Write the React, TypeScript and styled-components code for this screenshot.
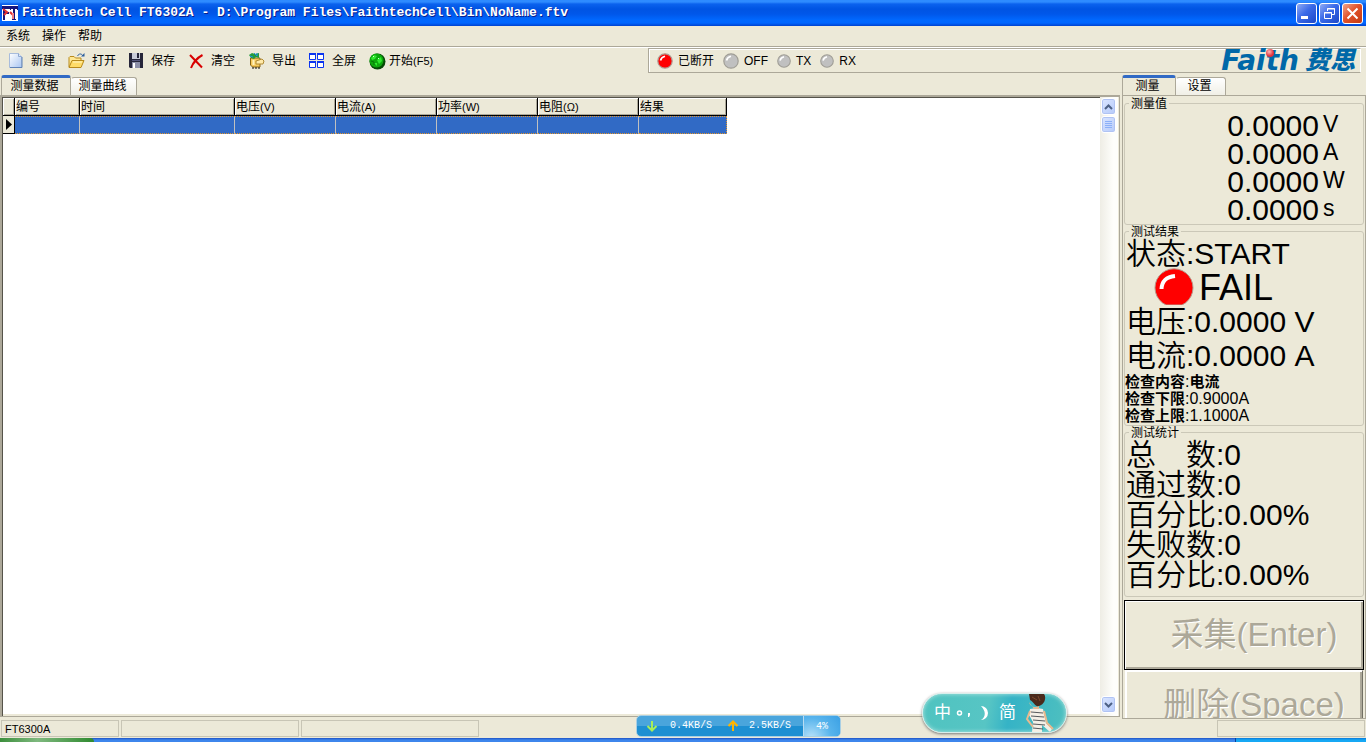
import React from "react";
import styled, { createGlobalStyle } from "styled-components";

const ui = `"Liberation Sans", "Noto Sans CJK SC", sans-serif`;
const face = "#ece9d8";
const shade = "#aca899";

const Global = createGlobalStyle`
  * { box-sizing: border-box; }
  body { margin: 0; background: ${face}; color: #000; font: 12px/16px ${ui}; }
  button { font: inherit; color: inherit; border: 0; padding: 0; margin: 0; background: none; }
`;

const Window = styled.div`
  position: relative;
  display: flex;
  flex-direction: column;
  height: 100vh;
  overflow: hidden;
  background: ${face};
`;

const TitleBar = styled.header`
  display: flex;
  align-items: center;
  flex: none;
  height: 26px;
  padding: 0 3px 0 2px;
  gap: 4px;
  background: linear-gradient(#2e8bff 0, #2e8bff 2px, #0b62ee 4px, #0054e3 9px, #0057ea 14px, #0068ff 20px, #0066ff 23px, #0042cf 26px);
`;

const Title = styled.h1`
  flex: 1;
  margin: 0;
  overflow: hidden;
  white-space: pre;
  color: #fff;
  font: bold 13px/24px "Liberation Mono", monospace;
  text-shadow: 1px 1px 0 #0a1e8c;
`;

const Controls = styled.div`
  display: flex;
  gap: 2px;
`;

const ControlButton = styled.button<{ $danger?: boolean }>`
  display: flex;
  width: 21px;
  height: 21px;
  border: 1px solid #fff;
  border-radius: 3px;
  background: ${(p) =>
    p.$danger
      ? "linear-gradient(135deg, #f0a58c, #e2532b 45%, #c33a12)"
      : "linear-gradient(135deg, #8fabf5, #3a6ae8 45%, #1c48c8)"};
`;

const MenuBar = styled.nav`
  display: flex;
  flex: none;
  height: 22px;
  padding: 0 6px;
  gap: 12px;
  border-bottom: 1px solid #fff;
  box-shadow: inset 0 -1px 0 ${shade};
`;

const MenuItem = styled.button`
  height: 20px;
  line-height: 20px;
`;

const ToolBar = styled.div`
  display: flex;
  align-items: center;
  flex: none;
  height: 27px;
  padding: 0 5px 2px 8px;
`;

const Tools = styled.div`
  display: flex;
  flex: 0 0 640px;
`;

const Tool = styled.button<{ $tight?: boolean }>`
  display: flex;
  align-items: center;
  gap: ${(p) => (p.$tight ? 3 : 7)}px;
  min-width: 60px;
  height: 24px;
  white-space: nowrap;
  svg { flex: none; }
`;

const Latin = styled.span`
  font-size: 11px;
`;

const LinkPanel = styled.div`
  display: flex;
  align-items: center;
  flex: 1;
  height: 25px;
  padding: 0 5px 0 8px;
  gap: 9px;
  border: 1px solid ${shade};
  border-right-color: #fff;
  box-shadow: inset 1px 1px 0 #fff;
`;

const Lamp = styled.span`
  display: flex;
  align-items: center;
  gap: 5px;
  line-height: 18px;
  padding-top: 1px;
`;

const Logo = styled.div`
  display: flex;
  align-items: center;
  gap: 6px;
  height: 23px;
  margin-left: auto;
  color: #0068a8;
  font: italic bold 28px/23px "DejaVu Sans", "Noto Sans CJK SC", sans-serif;
`;

const LogoMark = styled.span`
  position: relative;
`;

const LogoDot = styled.i`
  position: absolute;
  top: 0;
  left: 45px;
  width: 8px;
  height: 8px;
  border-radius: 50%;
  background: radial-gradient(circle at 40% 35%, #fbb, #e0323c 60%);
`;

const LogoCn = styled.span`
  font-size: 25px;
  font-weight: 900;
`;

const Body = styled.div`
  display: flex;
  flex: 1;
  min-height: 0;
`;

const Left = styled.main`
  display: flex;
  flex-direction: column;
  flex: 1;
  min-width: 0;
  padding-bottom: 2px;
`;

const Tabs = styled.div<{ $inset?: boolean }>`
  display: flex;
  align-items: flex-end;
  flex: none;
  height: 20px;
  padding-left: ${(p) => (p.$inset ? 0 : 1)}px;
`;

const Tab = styled.button<{ $active?: boolean; $w: number }>`
  width: ${(p) => p.$w}px;
  height: ${(p) => (p.$active ? 20 : 18)}px;
  padding: 0 3px 1px 0;
  border: 1px solid #aca899;
  border-top: ${(p) => (p.$active ? "3px solid #316ac5" : "1px solid #aca899")};
  border-bottom: 0;
  border-left-color: ${(p) => (p.$active ? "#aca899" : "transparent")};
  border-radius: 3px 3px 0 0;
  background: ${(p) => (p.$active ? face : "linear-gradient(#fff, #f0efe6)")};
  line-height: 15px;
  white-space: nowrap;
`;

const GridFrame = styled.section`
  display: flex;
  flex: 1;
  min-height: 0;
  margin-right: 2px;
  border: 2px solid ${shade};
  border-right: 1px solid ${shade};
  border-bottom: 1px solid ${shade};
  background: #fff;
  box-shadow: inset 1px 1px 0 #55534a, inset -2px -2px 0 #ece9d8;
`;

const GridArea = styled.div`
  flex: 1;
  min-width: 0;
  padding: 1px 0 0 1px;
`;

const Grid = styled.table`
  width: 724px;
  table-layout: fixed;
  border-collapse: separate;
  border-spacing: 0;
`;

const HeadCell = styled.th`
  height: 18px;
  padding: 0 1px;
  overflow: hidden;
  border-right: 1px solid #000;
  border-bottom: 1px solid #000;
  background: ${face};
  box-shadow: inset 1px 1px 0 #fff, inset -1px -1px 0 ${shade};
  font-weight: normal;
  line-height: 16px;
  text-align: left;
  white-space: nowrap;
`;

const Marker = styled.th`
  height: 18px;
  padding: 0 0 0 2px;
  border-right: 1px solid #000;
  border-bottom: 1px solid #000;
  background: ${face};
  svg { display: block; }
`;

const Cell = styled.td`
  height: 18px;
  padding: 0;
  border-top: 1px dotted #e0952e;
  border-bottom: 1px dotted #e0952e;
  border-right: 1px solid #c0c0c0;
  background: #316ac5;
  &:last-child { border-right: 1px dotted #e0952e; }
`;

const ScrollBar = styled.div`
  display: flex;
  flex-direction: column;
  flex: none;
  width: 19px;
  padding: 1px 3px 3px 1px;
  gap: 1px;
  background: linear-gradient(90deg, #eeede5, #fefefb 70%);
  box-shadow: inset -1px 0 0 #ece9d8;
`;

const ScrollButton = styled.button<{ $last?: boolean }>`
  display: flex;
  align-items: center;
  justify-content: center;
  flex: none;
  height: 17px;
  margin-top: ${(p) => (p.$last ? "auto" : 0)};
  border: 1px solid #fff;
  border-radius: 3px;
  background: linear-gradient(135deg, #dbe6ff, #b5cafa);
  box-shadow: inset 0 0 0 1px #b0c3f3;
`;

const Side = styled.aside`
  display: flex;
  flex-direction: column;
  flex: none;
  width: 244px;
  min-height: 0;
`;

const SidePage = styled.div`
  display: flex;
  flex-direction: column;
  flex: 1;
  min-height: 0;
  overflow: hidden;
  padding: 2px 1px 0;
  border: 1px solid ${shade};
`;

const Group = styled.fieldset<{ $pad: string }>`
  flex: none;
  min-width: 0;
  margin: 0 0 1px;
  padding: ${(p) => p.$pad};
  border: 1px solid #cbc8b8;
  border-radius: 3px;
`;

const Legend = styled.legend`
  height: 11px;
  margin-left: 4px;
  padding: 0 2px;
  font: 12px/12px ${ui};
`;

const Reading = styled.div`
  display: grid;
  grid-template-columns: 1fr 40px;
  column-gap: 4px;
  height: 28px;
  font: 30px/28px ${ui};
  text-align: right;
`;

const Unit = styled.span`
  font-size: 23px;
  line-height: 24px;
  text-align: left;
`;

const Line = styled.div<{ $h: number }>`
  height: ${(p) => p.$h}px;
  padding-left: 1px;
  font: 350 30px/${(p) => p.$h}px ${ui};
  white-space: pre;
`;

const FailLine = styled.div`
  display: flex;
  align-items: flex-end;
  gap: 5px;
  height: 34px;
  padding-left: 29px;
  font: 36px/34px ${ui};
  svg { flex: none; }
`;

const Check = styled.div`
  height: 17px;
  font: 16px/17px ${ui};
  b { font-size: 15px; font-weight: 600; }
`;

const BigButton = styled.button<{ $focus?: boolean }>`
  flex: none;
  height: 70px;
  margin: ${(p) => (p.$focus ? "2px 0 0" : "0 1px")};
  padding-left: 20px;
  border: 1px solid ${(p) => (p.$focus ? "#000" : "#fff")};
  border-right-color: ${(p) => (p.$focus ? "#000" : "#716f64")};
  background: ${face};
  box-shadow: inset 1px 1px 0 #fff, inset -2px -2px 0 ${shade};
  font: 33px/66px ${ui};
  white-space: nowrap;
  &:disabled { color: ${shade}; text-shadow: 1px 1px 0 #fff; }
`;

const StatusBar = styled.footer`
  display: flex;
  flex: none;
  height: 19px;
  padding: 1px 1px 0;
  gap: 2px;
`;

const StatusCell = styled.div<{ $w: number; $end?: boolean }>`
  width: ${(p) => p.$w}px;
  height: 17px;
  margin-left: ${(p) => (p.$end ? "auto" : 0)};
  padding-left: 3px;
  border: 1px solid #c8c5b5;
  font-size: 11px;
  line-height: 16px;
`;

const TaskBar = styled.div`
  display: flex;
  flex: none;
  height: 4px;
  background: linear-gradient(#1f52c4, #3d86ec 2px);
`;

const StartEdge = styled.div`
  width: 94px;
  border-radius: 0 4px 0 0;
  background: linear-gradient(90deg, #3c8f3c, #7fb97f 40%, #2f8a2f);
`;

const TrayEdge = styled.div`
  width: 131px;
  margin-left: auto;
  border-left: 1px solid #0a3e9c;
  background: linear-gradient(#0b78d8, #16a8f4 2px);
`;

const SpeedWidget = styled.div`
  position: absolute;
  left: calc(50% - 47px);
  bottom: 5px;
  display: flex;
  width: 205px;
  height: 22px;
  overflow: hidden;
  border: 1px solid #a9cfe4;
  border-radius: 5px;
  background: linear-gradient(#4aa5dc 0, #4aa5dc 50%, #1e8fd2 50%);
  color: #fff;
  font: 10px/22px "Liberation Mono", monospace;
`;

const Rate = styled.span<{ $w: number }>`
  display: flex;
  align-items: center;
  width: ${(p) => p.$w}px;
  padding-left: 8px;
  gap: 11px;
`;

const Load = styled.span`
  flex: 1;
  border-left: 1px solid #b9dcf2;
  background: radial-gradient(circle at 20% 110%, #b8e2fa, #58b4ec 55%, #3aa0e4);
  text-align: center;
`;

const ImeBar = styled.div`
  position: absolute;
  right: 299px;
  bottom: 9px;
  display: flex;
  align-items: center;
  width: 145px;
  height: 40px;
  padding-left: 11px;
  gap: 4px;
  overflow: hidden;
  border: 1px solid #d8efec;
  border-radius: 20px;
  background: linear-gradient(100deg, #4fc3c0, #57c5c4 45%, #35b3c6 60%, #4fc0bf);
  box-shadow: 0 1px 3px #777, inset 0 0 4px #b5e6e2;
  color: #fff;
  font: 17px/38px ${ui};
`;

const ImePicture = styled.svg`
  position: absolute;
  top: 0;
  right: 0;
`;

const AppIcon = () => (
  <svg width="16" height="16" viewBox="0 0 16 16">
    <path d="M0 0h16v16H0z" fill="#fff" />
    <path d="M0 1h8v3H3v3h4v2H3v6H1V4H0zM8 1h8v4h-1V4h-2v10h1v1h-4v-1h1V4H9v1H8z" fill="#15157c" />
    <path d="M1 4l4 3-3 3M8 7l3 3" stroke="#e23030" strokeWidth="2" fill="none" />
    <path d="M10 8h2v6h-2z" fill="#f08080" />
  </svg>
);

const NewIcon = () => (
  <svg width="16" height="16" viewBox="0 0 16 16">
    <defs>
      <linearGradient id="page" x1="0" y1="0" x2="1" y2="1">
        <stop offset="0" stopColor="#fff" />
        <stop offset="1" stopColor="#a9c6f2" />
      </linearGradient>
    </defs>
    <path d="M1.500 .5h9l3 3v11h-12z" fill="url(#page)" stroke="#a8bcdc" />
    <path d="M2 14.500h12V4" fill="none" stroke="#5f83b8" />
    <path d="M10.500 .5v3h3" fill="#dce8fb" stroke="#8fa8d0" />
  </svg>
);

const OpenIcon = () => (
  <svg width="17" height="16" viewBox="0 0 17 16">
    <path d="M1 14V4.500l1-1h4l1.500 1.500H13V8" fill="#ffe894" stroke="#b88a1c" />
    <path d="M1 14.500 4 7.500h12l-3 7z" fill="#ffdc68" stroke="#b88a1c" />
    <path d="M5 9h9" stroke="#fff6c8" />
    <path d="M9.500 3C11 .3 13.500 .3 15 3" fill="none" stroke="#2b5f9e" />
    <path d="M13 3.500h3.500V0z" fill="#2b5f9e" />
  </svg>
);

const SaveIcon = () => (
  <svg width="16" height="16" viewBox="0 0 16 16">
    <path d="M1 0h14v15H2l-1-1z" fill="#26263a" />
    <path d="M4 0h8v6H4z" fill="#c9ccd8" />
    <path d="M9 0h2v5H9z" fill="#26263a" />
    <path d="M4 7h8v1H4z" fill="#55577c" />
    <path d="M4 9h8v6H4z" fill="#8d90a8" />
    <path d="M5 10h2v5H5z" fill="#fff" />
  </svg>
);

const ClearIcon = () => (
  <svg width="16" height="16" viewBox="0 0 16 16">
    <path d="M2 2 14 14.500M14.500 2C9 5 5 10 3 15" fill="none" stroke="#d80000" strokeWidth="2" />
  </svg>
);

const ExportIcon = () => (
  <svg width="17" height="17" viewBox="0 0 17 17">
    <path d="M2.500 6h9.500v9H4.500l-2-2z" fill="#f6c95c" stroke="#8a6414" />
    <path d="M8 9l6-2 2 2-1 3H8z" fill="#ffe9a8" stroke="#b08a34" />
    <path d="M5.500 8v5" stroke="#fff0bd" strokeWidth="2" />
    <path d="M4 16h8" stroke="#111" strokeDasharray="2 1" />
    <path d="M1 3l3-2 3 1 4-1v5L8 5 6 7 3 6z" fill="#259a3c" />
    <path d="M2 4l3 1M6 1l3 3M9 1v3" stroke="#1c8ee8" strokeWidth="1" />
  </svg>
);

const FullIcon = () => (
  <svg width="17" height="16" viewBox="0 0 17 16">
    <path d="M1.500 1.500h6v5h-6zM9.500 1.500h6v5h-6zM1.500 9.500h6v5h-6zM9.500 9.500h6v5h-6z" fill="#fff" stroke="#0a34f0" />
    <path d="M1 1h7M9 1h7M1 9h7M9 9h7" stroke="#0a34f0" strokeWidth="2" />
  </svg>
);

const StartIcon = () => (
  <svg width="18" height="18" viewBox="0 0 18 18">
    <circle cx="9.500" cy="9.500" r="8" fill="#064a06" />
    <circle cx="8.500" cy="8.500" r="7" fill="#0da80d" />
    <path d="M3 6l3-3 3 1-2 3-3 1zM9 8l4-3 1 4-3 3zM6 11l3 0 0 3z" fill="#2fea2f" />
    <path d="M3 9l3 1 0 3" stroke="#067806" fill="none" />
    <path d="M5 5l1-1M10 7l1-1" stroke="#d6ffd6" />
  </svg>
);

const LampIcon = ({ size, color, rim }: { size: number; color: string; rim: string }) => (
  <svg width={size} height={size} viewBox="0 0 16 16">
    <circle cx="8" cy="8" r="7.200" fill={color} stroke={rim} strokeWidth="1.200" />
    <path d="M3.500 7.500C4 5 5 4 8 3.200" fill="none" stroke="#fff" strokeWidth="1.700" />
  </svg>
);

const FailLamp = () => (
  <svg width="40" height="37" viewBox="0 0 40 37">
    <path d="M12 37A19 19 0 1 1 28 37z" fill="#f00" stroke="#b89a8c" />
    <path d="M7.500 21C8 13 12 9 21 8" fill="none" stroke="#fff" strokeWidth="4" />
  </svg>
);

const tools = [
  { label: "新建", icon: <NewIcon /> },
  { label: "打开", icon: <OpenIcon /> },
  { label: "保存", icon: <SaveIcon /> },
  { label: "清空", icon: <ClearIcon /> },
  { label: "导出", icon: <ExportIcon /> },
  { label: "全屏", icon: <FullIcon /> },
];

const columns = [
  { label: "编号", unit: "", width: 65 },
  { label: "时间", unit: "", width: 155 },
  { label: "电压", unit: "(V)", width: 101 },
  { label: "电流", unit: "(A)", width: 101 },
  { label: "功率", unit: "(W)", width: 101 },
  { label: "电阻", unit: "(Ω)", width: 101 },
  { label: "结果", unit: "", width: 88 },
];

const readings = ["V", "A", "W", "s"];
const stats = ["总\u3000数:0", "通过数:0", "百分比:0.00%", "失败数:0", "百分比:0.00%"];

export default function App() {
  return (
    <Window>
      <Global />
      <TitleBar>
        <AppIcon />
        <Title>{"Faithtech Cell FT6302A - D:\\Program Files\\FaithtechCell\\Bin\\NoName.ftv"}</Title>
        <Controls>
          <ControlButton aria-label="最小化">
            <svg width="19" height="19"><path d="M4 12h7v3H4z" fill="#fff" /></svg>
          </ControlButton>
          <ControlButton aria-label="还原">
            <svg width="19" height="19" fill="none" stroke="#fff">
              <path d="M7.500 7V4.500h7v6H12M7 5h8M4.500 8.500h7v6h-7zM4 9h8" />
            </svg>
          </ControlButton>
          <ControlButton $danger aria-label="关闭">
            <svg width="19" height="19"><path d="M4.500 4.500l10 10M14.500 4.500l-10 10" stroke="#fff" strokeWidth="2" /></svg>
          </ControlButton>
        </Controls>
      </TitleBar>

      <MenuBar>
        {["系统", "操作", "帮助"].map((m) => <MenuItem key={m}>{m}</MenuItem>)}
      </MenuBar>

      <ToolBar>
        <Tools>
          {tools.map((t) => <Tool key={t.label}>{t.icon}{t.label}</Tool>)}
          <Tool $tight><StartIcon /><span>开始<Latin>(F5)</Latin></span></Tool>
        </Tools>
        <LinkPanel>
          <Lamp><LampIcon size={16} color="#f00" rim="#b09a90" />已断开</Lamp>
          <Lamp><LampIcon size={16} color="#c0c0c0" rim="#a09e96" />OFF</Lamp>
          <Lamp><LampIcon size={14} color="#c0c0c0" rim="#a09e96" />TX</Lamp>
          <Lamp><LampIcon size={14} color="#c0c0c0" rim="#a09e96" />RX</Lamp>
          <Logo>
            <LogoMark>Faith<LogoDot /></LogoMark>
            <LogoCn>费思</LogoCn>
          </Logo>
        </LinkPanel>
      </ToolBar>

      <Body>
        <Left>
          <Tabs>
            <Tab $active $w={70}>测量数据</Tab>
            <Tab $w={66}>测量曲线</Tab>
          </Tabs>
          <GridFrame>
            <GridArea>
              <Grid>
                <colgroup>
                  <col width={12} />
                  {columns.map((c) => <col key={c.label} width={c.width} />)}
                </colgroup>
                <thead>
                  <tr>
                    <HeadCell aria-label="当前行" />
                    {columns.map((c) => (
                      <HeadCell key={c.label}>{c.label}{c.unit && <Latin>{c.unit}</Latin>}</HeadCell>
                    ))}
                  </tr>
                </thead>
                <tbody>
                  <tr>
                    <Marker scope="row">
                      <svg width="7" height="11"><path d="M1 0l6 5.500L1 11z" /></svg>
                    </Marker>
                    {columns.map((c) => <Cell key={c.label} />)}
                  </tr>
                </tbody>
              </Grid>
            </GridArea>
            <ScrollBar>
              <ScrollButton aria-label="向上">
                <svg width="9" height="6"><path d="M1 5l3.500-3.500L8 5" fill="none" stroke="#4d6185" strokeWidth="2" /></svg>
              </ScrollButton>
              <ScrollButton aria-label="滑块">
                <svg width="7" height="8"><path d="M0 .5h7M0 2.500h7M0 4.500h7M0 6.500h7" stroke="#8cb0f8" /></svg>
              </ScrollButton>
              <ScrollButton $last aria-label="向下">
                <svg width="9" height="6"><path d="M1 1l3.500 3.500L8 1" fill="none" stroke="#4d6185" strokeWidth="2" /></svg>
              </ScrollButton>
            </ScrollBar>
          </GridFrame>
        </Left>

        <Side>
          <Tabs $inset>
            <Tab $active $w={54}>测量</Tab>
            <Tab $w={50}>设置</Tab>
          </Tabs>
          <SidePage>
            <Group $pad="3px 0 0">
              <Legend>测量值</Legend>
              {readings.map((u) => (
                <Reading key={u}>0.0000<Unit>{u}</Unit></Reading>
              ))}
            </Group>
            <Group $pad="0 0 1px">
              <Legend>测试结果</Legend>
              <Line $h={34}>状态:START</Line>
              <FailLine><FailLamp />FAIL</FailLine>
              <Line $h={34}>电压:0.0000 V</Line>
              <Line $h={34}>电流:0.0000 A</Line>
              <Check><b>检查内容</b>:<b>电流</b></Check>
              <Check><b>检查下限</b>:0.9000A</Check>
              <Check><b>检查上限</b>:1.1000A</Check>
            </Group>
            <Group $pad="2px 0 6px">
              <Legend>测试统计</Legend>
              {stats.map((s, i) => <Line key={i} $h={30}>{s}</Line>)}
            </Group>
            <BigButton $focus disabled>采集(Enter)</BigButton>
            <BigButton disabled>删除(Space)</BigButton>
          </SidePage>
        </Side>
      </Body>

      <StatusBar>
        <StatusCell $w={118}>FT6300A</StatusCell>
        <StatusCell $w={178} />
        <StatusCell $w={178} />
        <StatusCell $w={148} $end />
      </StatusBar>
      <TaskBar>
        <StartEdge />
        <TrayEdge />
      </TaskBar>

      <SpeedWidget>
        <Rate $w={83}>
          <svg width="14" height="12"><path d="M7 1v9M2.500 6 7 10.500 11.500 6" fill="none" stroke="#a8ee5a" strokeWidth="2" /></svg>
          0.4KB/S
        </Rate>
        <Rate $w={83}>
          <svg width="10" height="12" viewBox="2 0 10 12"><path d="M7 11V2M2.500 6 7 1.500 11.500 6" fill="none" stroke="#ffb400" strokeWidth="2" /></svg>
          2.5KB/S
        </Rate>
        <Load>4%</Load>
      </SpeedWidget>

      <ImeBar>
        中
        <svg width="40" height="16" viewBox="0 0 40 16" fill="#fff">
          <circle cx="4.500" cy="8" r="2" fill="none" stroke="#fff" strokeWidth="1.500" />
          <path d="M13 8h2v2l-1 2h-1z" />
          <path d="M26 1a7 7 0 1 1 0 14c5-3 5-9 0-14z" />
        </svg>
        简
        <ImePicture width="46" height="38" viewBox="0 0 46 38">
          <path d="M10 15l7-1 6 1 3 14 6 6-2 3-8-7v7H12l1-10-4-7z" fill="#f3efe6" />
          <path d="M11 18l12 1M11 22l13 1M13 26l12 1M13 30l12 1M13 34l10 1" stroke="#55585c" />
          <path d="M10 17l-3 8 6 8M24 17l3 12 6 6" fill="none" stroke="#e9b98e" strokeWidth="2" />
          <path d="M9 8c1 5 6 6 10 4v3h-5z" fill="#e8b890" />
          <path d="M9 0h15c3 4 0 11-5 12-4 1-5-4-9-6z" fill="#4a2a1c" />
          <path d="M12 3l5 3M18 2l2 5" stroke="#7d4a2c" />
        </ImePicture>
      </ImeBar>
    </Window>
  );
}
